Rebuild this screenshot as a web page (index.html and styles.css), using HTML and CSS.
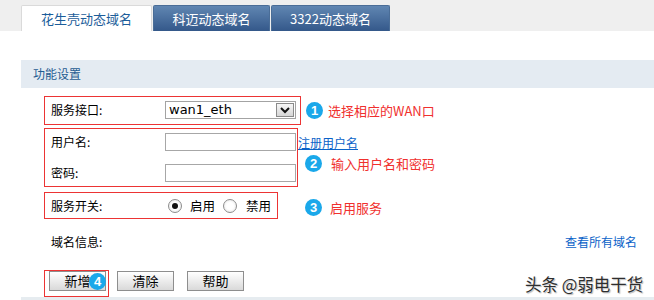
FILE: index.html
```html
<!DOCTYPE html>
<html>
<head>
<meta charset="utf-8">
<link rel="stylesheet" href="styles.css">
</head>
<body>
<div class="tabbar">
  <div class="tab active">花生壳动态域名</div>
  <div class="tab blue t2">科迈动态域名</div>
  <div class="tab blue t3">3322动态域名</div>
</div>
<div class="main">
  <div class="section-head">功能设置</div>
  <div class="form">
    <div class="group">
      <div class="box box1">
        <div class="row">
          <span class="label">服务接口:</span>
          <div class="select">
            <span class="sel-text">wan1_eth</span>
            <span class="sel-btn"><svg width="12" height="8" viewBox="0 0 12 8"><polyline points="2,2 6,6 10,2" fill="none" stroke="#111" stroke-width="2"/></svg></span>
          </div>
        </div>
      </div>
      <div class="note n1"><span class="num">1</span>选择相应的WAN口</div>
    </div>
    <div class="group g2">
      <div class="box box2">
        <div class="row">
          <span class="label">用户名:</span>
          <span class="input"></span>
          <a class="link reg">注册用户名</a>
        </div>
        <div class="row r2">
          <span class="label">密码:</span>
          <span class="input"></span>
        </div>
      </div>
      <div class="note n2"><span class="num">2</span>输入用户名和密码</div>
    </div>
    <div class="group g3">
      <div class="box box3">
        <span class="label">服务开关:</span>
        <span class="radio checked r1"></span><span class="rtext">启用</span>
        <span class="radio r2b"></span><span class="rtext rt2">禁用</span>
      </div>
      <div class="note n3"><span class="num">3</span>启用服务</div>
    </div>
    <div class="domain-row">
      <span>域名信息:</span>
      <a class="link">查看所有域名</a>
    </div>
    <div class="buttons">
      <div class="btn-box">
        <div class="btn">新增</div>
        <span class="num badge">4</span>
      </div>
      <div class="btn b2">清除</div>
      <div class="btn b3">帮助</div>
    </div>
    <div class="bottom-line"></div>
  </div>
</div>
<div class="watermark">头条 @弱电干货</div>
</body>
</html>
```

FILE: styles.css
```css
body {
  margin: 0;
  width: 654px;
  height: 300px;
  overflow: hidden;
  position: relative;
  background: #fff;
  color: #000;
  font-family: "Noto Sans CJK SC", sans-serif;
  font-size: 12px;
}

.tabbar {
  height: 31px;
  box-sizing: border-box;
  background: #efefef;
  display: flex;
  align-items: flex-end;
  padding-left: 21px;
}

.tab {
  height: 26px;
  box-sizing: border-box;
  font-size: 13px;
  line-height: 26px;
  text-align: center;
  border-radius: 2px 2px 0 0;
}

.tab.active {
  width: 131px;
  background: #fff;
  border: 1px solid #dadada;
  border-bottom: none;
  color: #1c5d9a;
}

.tab.blue {
  margin-left: 1px;
  background: linear-gradient(#6086b2, #34588a);
  border: 1px solid #4a6d97;
  border-bottom: none;
  color: #fff;
}

.t2 { width: 117px; }
.t3 { width: 119px; }

.main {
  margin-left: 21px;
}

.section-head {
  margin-top: 29px;
  height: 28px;
  line-height: 28px;
  background: #e4ebf2;
  padding-left: 12px;
  color: #1f5b91;
}

.form {
  padding-left: 23px;
  padding-top: 8px;
}

.group {
  display: flex;
  align-items: center;
}

.g2 { margin-top: 3px; }
.g3 { margin-top: 5px; }

.box {
  border: 1px solid #ec3434;
  box-sizing: border-box;
}

.box1 {
  width: 257px;
  height: 29px;
  padding: 4px 0 5px 6px;
}

.box2 {
  width: 254px;
  height: 59px;
  padding: 4px 0 4px 6px;
}

.box3 {
  width: 234px;
  height: 27px;
  padding-left: 6px;
  display: flex;
  align-items: center;
}

.row {
  display: flex;
  align-items: center;
  height: 18px;
  white-space: nowrap;
}

.row.r2 { margin-top: 13px; }

.label {
  width: 114px;
  flex: none;
  line-height: 18px;
}

.select {
  width: 131px;
  height: 18px;
  box-sizing: border-box;
  border: 1px solid #a3a3a3;
  display: flex;
  align-items: center;
  justify-content: space-between;
  background: #fff;
}

.sel-text {
  padding-left: 3px;
  font-family: "DejaVu Sans", sans-serif;
  font-size: 13px;
  line-height: 16px;
}

.sel-btn {
  width: 18px;
  height: 14px;
  margin-right: 1px;
  box-sizing: border-box;
  border: 1px solid #8a8a8a;
  background: linear-gradient(#f6f6f6, #d6d6d6);
  display: flex;
  align-items: center;
  justify-content: center;
}

.input {
  width: 131px;
  height: 18px;
  flex: none;
  box-sizing: border-box;
  border: 1px solid #a7a7a7;
  background: #fff;
}

.link {
  color: #0a62c8;
  text-decoration: underline;
}

.domain-row .link { text-decoration: none; }

.reg { margin-left: 2px; }

.note {
  display: flex;
  align-items: center;
  color: #f0302e;
  font-size: 13px;
  white-space: nowrap;
}

.num {
  width: 17px;
  height: 17px;
  flex: none;
  border-radius: 50%;
  background: #1aa8ea;
  color: #fff;
  font-family: "Liberation Sans", sans-serif;
  font-weight: bold;
  font-size: 13px;
  line-height: 17px;
  text-align: center;
}

.n1 { margin-left: 5px; }
.n1 .num { margin-right: 5px; }
.n2 { margin-left: 7px; margin-top: 12px; }
.n2 .num { margin-right: 9px; }
.n3 { margin-left: 27px; margin-top: 4px; }
.n3 .num { margin-right: 8px; }

.radio {
  width: 14px;
  height: 14px;
  flex: none;
  box-sizing: border-box;
  border-radius: 50%;
  border: 1px solid #8d8d8d;
  background: radial-gradient(circle, #ffffff 40%, #e2e2e2 100%);
  display: flex;
  align-items: center;
  justify-content: center;
}

.radio.checked::after {
  content: "";
  width: 6px;
  height: 6px;
  border-radius: 50%;
  background: #111;
}

.r1 { margin-left: 3px; }
.rtext { margin-left: 8px; font-size: 12.5px; }
.r2b { margin-left: 8px; }
.rt2 { margin-left: 9px; }

.domain-row {
  display: flex;
  justify-content: space-between;
  align-items: center;
  height: 20px;
  margin-top: 12px;
  padding-left: 7px;
  padding-right: 17px;
}

.buttons {
  display: flex;
  align-items: flex-start;
  margin-top: 19px;
}

.btn-box {
  position: relative;
  width: 65px;
  height: 27px;
  box-sizing: border-box;
  border: 1px solid #ec3434;
  padding: 0 1px 4px 4px;
}

.btn {
  width: 57px;
  height: 20px;
  box-sizing: border-box;
  border: 1px solid #8e8e8e;
  background: linear-gradient(#ffffff, #d9d9d9);
  font-size: 13px;
  line-height: 18px;
  text-align: center;
}

.b2 { margin-left: 8px; margin-top: 1px; }
.b3 { margin-left: 13px; margin-top: 1px; }

.badge {
  position: absolute;
  left: 44px;
  top: 2px;
}

.bottom-line {
  height: 3px;
  margin-left: -23px;
  background: #e6ecf0;
}

.watermark {
  position: absolute;
  left: 525px;
  top: 272px;
  font-size: 16.5px;
  color: #2e2e2e;
  text-shadow: 0 0 2px #fff, 1px 1px 1px rgba(0, 0, 0, 0.35);
  white-space: nowrap;
}
```
